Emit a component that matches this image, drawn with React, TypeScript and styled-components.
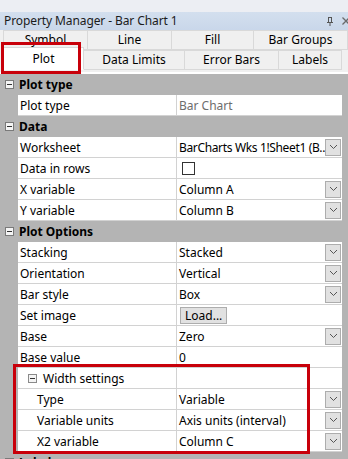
import React from "react";
import styled, { createGlobalStyle } from "styled-components";

const GlobalStyle = createGlobalStyle`
  body {
    margin: 0;
    font-family: "Noto Sans", "Open Sans", sans-serif;
    font-size: 12px;
    color: #000;
  }
`;

const Panel = styled.div`
  position: relative;
  width: 348px;
  height: 459px;
  overflow: hidden;
  background: #f0f0f0;
`;

const TopStrip = styled.div`
  height: 12px;
  background: #eceef3;
`;

const TitleBar = styled.div`
  height: 18px;
  display: flex;
  align-items: center;
  padding-left: 4px;
  background: linear-gradient(#d3dfee, #c9d7ea);
  color: #1b1b1b;
`;

const TitleText = styled.span`
  flex: 1;
  line-height: 18px;
  letter-spacing: -0.1px;
`;

const TitleIcons = styled.div`
  display: flex;
  align-items: center;
  gap: 8px;
  margin-right: -2px;
`;

const Tabs = styled.div`
  padding: 0 0 0 3px;
  background: #f0f0f0;
  height: 42px;
  border-bottom: 2px solid #ffffff;
`;

const TabRow = styled.div<{ $front?: boolean }>`
  display: flex;
  height: 20px;
  position: relative;
  z-index: ${(p) => (p.$front ? 2 : 1)};
`;

const Tab = styled.div<{ $w: number; $active?: boolean }>`
  width: ${(p) => p.$w}px;
  flex: none;
  box-sizing: border-box;
  display: flex;
  align-items: center;
  justify-content: center;
  border: 1px solid #d9d9d9;
  border-left-width: 0;
  background: ${(p) => (p.$active ? "#ffffff" : "#f0f0f0")};
  height: ${(p) => (p.$active ? 23 : 20)}px;
  margin-top: ${(p) => (p.$active ? -3 : 0)}px;
  border-bottom-color: ${(p) => (p.$active ? "#ffffff" : "#d9d9d9")};
  &:first-child {
    border-left-width: 1px;
  }
  padding-bottom: 1px;
`;

const Highlight = styled.div<{ $x: number; $y: number; $w: number; $h: number }>`
  position: absolute;
  left: ${(p) => p.$x}px;
  top: ${(p) => p.$y}px;
  width: ${(p) => p.$w}px;
  height: ${(p) => p.$h}px;
  box-sizing: border-box;
  border: 3px solid #c8000a;
  z-index: 5;
  pointer-events: none;
`;

const Grid = styled.div`
  background: #b4b4b4;
  padding-right: 6px;
`;

const Row = styled.div`
  display: flex;
  height: 21px;
`;

const Gutter = styled.div`
  width: 18px;
  flex: none;
  background: #b4b4b4;
`;

const NameCell = styled.div<{ $indent?: boolean }>`
  width: 159px;
  flex: none;
  box-sizing: border-box;
  background: #fff;
  border-right: 1px solid #d2d2d2;
  border-bottom: 1px solid #d2d2d2;
  display: flex;
  align-items: center;
  padding-left: ${(p) => (p.$indent ? 19 : 2)}px;
  white-space: nowrap;
`;

const ValueCell = styled.div<{ $dim?: boolean }>`
  flex: 1;
  min-width: 0;
  box-sizing: border-box;
  background: #fff;
  border-bottom: 1px solid #d2d2d2;
  display: flex;
  align-items: center;
  padding-left: 2px;
  color: ${(p) => (p.$dim ? "#6d6d6d" : "#000")};
`;

const ValueText = styled.span<{ $tight?: boolean }>`
  flex: 1;
  min-width: 0;
  white-space: nowrap;
  letter-spacing: ${(p) => (p.$tight ? "-0.35px" : "normal")};
`;

const DropButton = styled.div`
  width: 16px;
  height: 17px;
  flex: none;
  box-sizing: border-box;
  margin: 0 1px 0 2px;
  background: #e1e1e1;
  border: 1px solid #adadad;
  display: flex;
  align-items: center;
  justify-content: center;
`;

const CheckBox = styled.div`
  width: 13px;
  height: 13px;
  box-sizing: border-box;
  border: 1px solid #333;
  background: #fff;
  margin-left: 3px;
`;

const LoadButton = styled.div`
  height: 17px;
  box-sizing: border-box;
  padding: 0 4px;
  margin-left: 1px;
  background: #e1e1e1;
  border: 1px solid #adadad;
  display: flex;
  align-items: center;
`;

const CategoryRow = styled.div`
  display: flex;
  align-items: center;
  height: 21px;
  background: #b4b4b4;
  font-weight: bold;
`;

const Toggle = styled.div<{ $light?: boolean }>`
  width: 9px;
  height: 9px;
  box-sizing: border-box;
  border: 1px solid ${(p) => (p.$light ? "#8a8a8a" : "#7a7a7a")};
  background: #f4f4f4;
  margin: 0 5px 0 5px;
  display: flex;
  align-items: center;
  justify-content: center;
  flex: none;
  &::after {
    content: "";
    width: 5px;
    height: 1px;
    background: #333;
  }
`;

const SubToggle = styled(Toggle)`
  margin: 0 6px 0 5px;
`;

const SubName = styled(NameCell)`
  padding-left: 5px;
`;

const Chevron = () => (
  <svg width="9" height="6" viewBox="0 0 9 6">
    <path d="M1 1 L4.5 4.5 L8 1" fill="none" stroke="#555" strokeWidth="1" />
  </svg>
);

const Pin = () => (
  <svg width="8" height="9" viewBox="0 0 8 9">
    <path d="M2 0.5 H6 M2.5 0.5 V5 M5.5 0.5 V5 M1 5.5 H7 M4 5.5 V9" fill="none" stroke="#555" strokeWidth="1" />
  </svg>
);

const Close = () => (
  <svg width="8" height="8" viewBox="0 0 8 8">
    <path d="M0.5 0.5 L7.5 7.5 M7.5 0.5 L0.5 7.5" fill="none" stroke="#6a6a6a" strokeWidth="1.3" />
  </svg>
);

type Prop = {
  name: string;
  value?: string;
  kind?: "drop" | "text" | "dim" | "check" | "load";
  sub?: boolean;
  tight?: boolean;
};

const Property: React.FC<Prop> = ({ name, value, kind = "drop", sub, tight }) => (
  <Row>
    <Gutter />
    <NameCell $indent={sub}>{name}</NameCell>
    <ValueCell $dim={kind === "dim"}>
      {kind === "check" && <CheckBox />}
      {kind === "load" && <LoadButton>Load...</LoadButton>}
      {kind !== "check" && kind !== "load" && <ValueText $tight={tight}>{value}</ValueText>}
      {kind === "drop" && (
        <DropButton>
          <Chevron />
        </DropButton>
      )}
    </ValueCell>
  </Row>
);

const Category: React.FC<{ label: string }> = ({ label }) => (
  <CategoryRow>
    <Toggle />
    {label}
  </CategoryRow>
);

export default function App() {
  return (
    <Panel>
      <GlobalStyle />
      <TopStrip />
      <TitleBar>
        <TitleText>Property Manager - Bar Chart 1</TitleText>
        <TitleIcons>
          <Pin />
          <Close />
        </TitleIcons>
      </TitleBar>
      <Tabs>
        <TabRow>
          <Tab $w={85}>Symbol</Tab>
          <Tab $w={84}>Line</Tab>
          <Tab $w={82}>Fill</Tab>
          <Tab $w={94}>Bar Groups</Tab>
        </TabRow>
        <TabRow $front>
          <Tab $w={81} $active>
            Plot
          </Tab>
          <Tab $w={101}>Data Limits</Tab>
          <Tab $w={94}>Error Bars</Tab>
          <Tab $w={63}>Labels</Tab>
        </TabRow>
      </Tabs>
      <Grid>
        <Category label="Plot type" />
        <Property name="Plot type" value="Bar Chart" kind="dim" />
        <Category label="Data" />
        <Property name="Worksheet" value="BarCharts Wks 1!Sheet1 (B..." tight />
        <Property name="Data in rows" kind="check" />
        <Property name="X variable" value="Column A" />
        <Property name="Y variable" value="Column B" />
        <Category label="Plot Options" />
        <Property name="Stacking" value="Stacked" />
        <Property name="Orientation" value="Vertical" />
        <Property name="Bar style" value="Box" />
        <Property name="Set image" kind="load" />
        <Property name="Base" value="Zero" />
        <Property name="Base value" value="0" kind="text" />
        <Row>
          <Gutter />
          <SubName>
            <SubToggle $light />
            Width settings
          </SubName>
          <ValueCell />
        </Row>
        <Property name="Type" value="Variable" sub />
        <Property name="Variable units" value="Axis units (interval)" sub />
        <Property name="X2 variable" value="Column C" sub />
        <Category label="Labels" />
      </Grid>
      <Highlight $x={1} $y={42} $w={80} $h={32} />
      <Highlight $x={13} $y={364} $w={297} $h={90} />
    </Panel>
  );
}
